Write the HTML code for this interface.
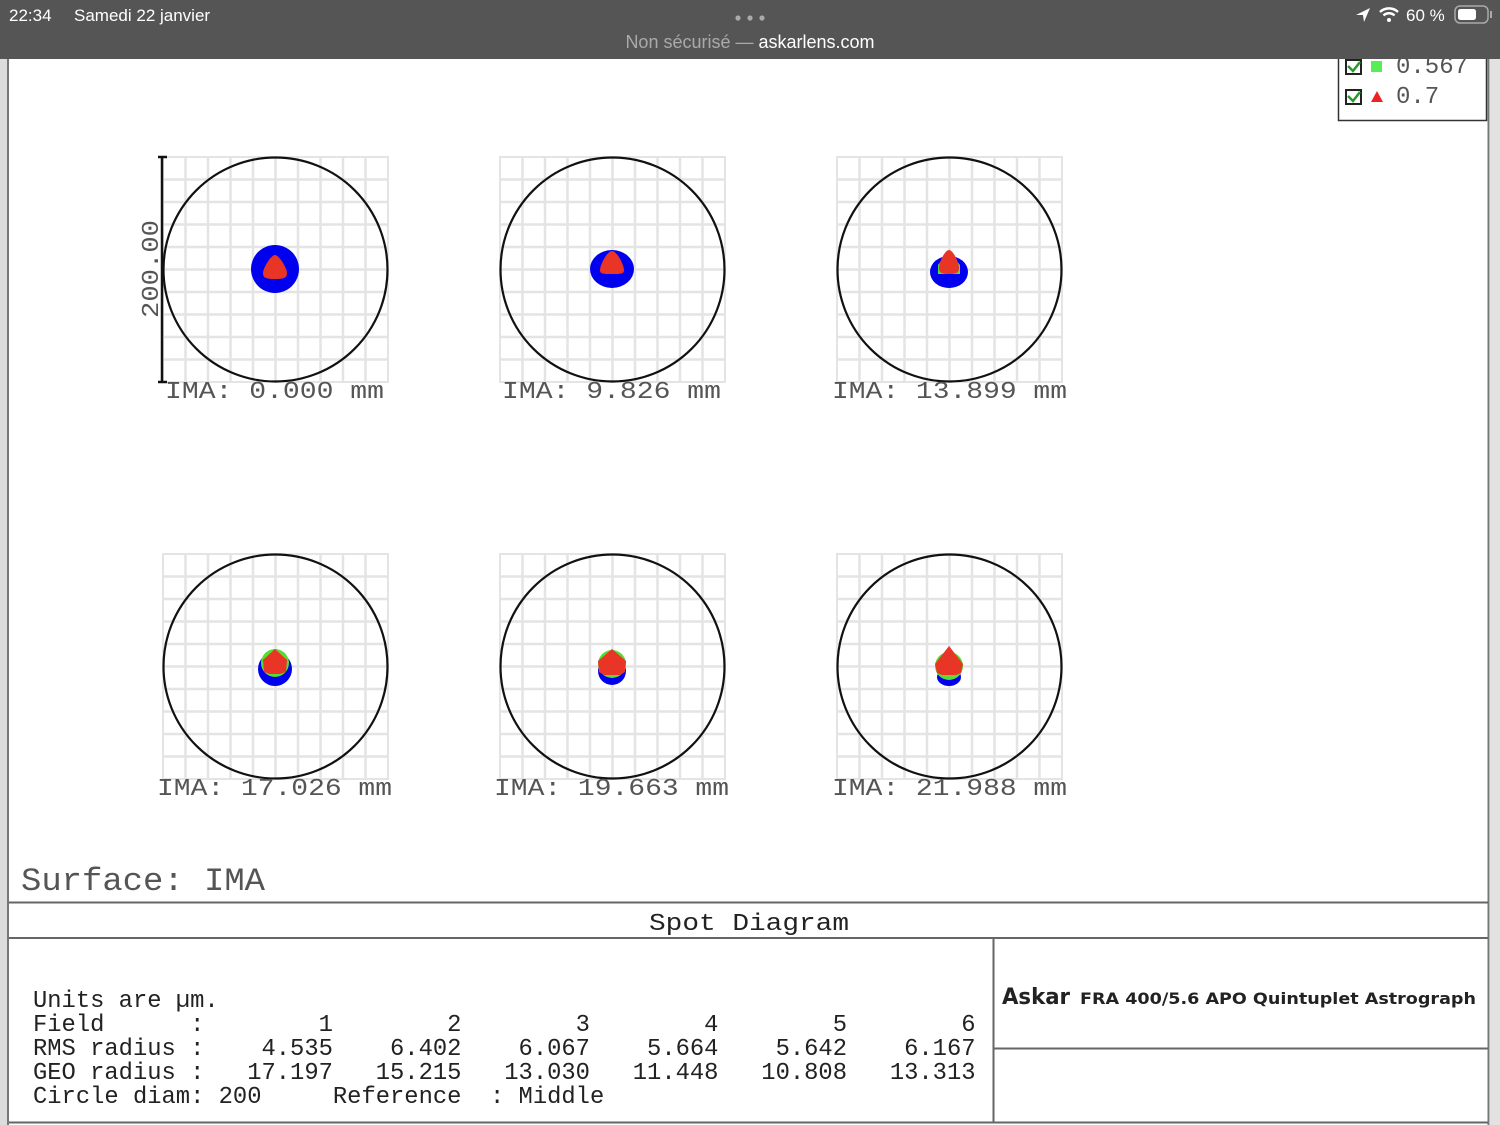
<!DOCTYPE html>
<html><head><meta charset="utf-8"><style>
html,body{margin:0;padding:0;width:1500px;height:1125px;overflow:hidden;background:#fff}
svg{display:block}
.m{font-family:"Liberation Mono",monospace;fill:#555}
.t{font-family:"Liberation Mono",monospace;fill:#222;font-size:23.8px}
</style></head><body>
<svg width="1500" height="1125" viewBox="0 0 1500 1125" xmlns="http://www.w3.org/2000/svg">
<defs>
<g id="grid">
<rect x="0" y="0" width="225" height="225" fill="none" stroke="#e4e4e4" stroke-width="2"/>
<path d="M22.5 0V225M45 0V225M67.5 0V225M90 0V225M112.5 0V225M135 0V225M157.5 0V225M180 0V225M202.5 0V225M0 22.5H225M0 45H225M0 67.5H225M0 90H225M0 112.5H225M0 135H225M0 157.5H225M0 180H225M0 202.5H225" stroke="#e4e4e4" stroke-width="2.5"/>
<circle cx="112.5" cy="112.5" r="112" fill="none" stroke="#111" stroke-width="2.2"/>
</g>
</defs>
<rect x="0" y="59" width="1500" height="1066" fill="#fff"/>
<rect x="0" y="59" width="7" height="1066" fill="#dcdcdc"/>
<rect x="7" y="59" width="2" height="1066" fill="#777"/>
<rect x="1490" y="59" width="10" height="1066" fill="#e2e2e2"/>
<rect x="1487.5" y="59" width="2" height="1066" fill="#777"/>
<!-- status bar -->
<rect x="0" y="0" width="1500" height="59" fill="#555"/>
<text x="9" y="21" font-family="Liberation Sans,sans-serif" font-size="17" fill="#fff">22:34</text>
<text x="74" y="21" font-family="Liberation Sans,sans-serif" font-size="17" fill="#fff">Samedi 22 janvier</text>
<circle cx="738" cy="18" r="2.6" fill="#aaa"/><circle cx="750" cy="18" r="2.6" fill="#aaa"/><circle cx="762" cy="18" r="2.6" fill="#aaa"/>
<text x="750" y="48" text-anchor="middle" font-family="Liberation Sans,sans-serif" font-size="18" fill="#aaa">Non sécurisé — <tspan fill="#fff">askarlens.com</tspan></text>
<path d="M1370 8 L1356 15 L1363 15 L1364 22 Z" fill="#fff"/>
<path d="M1380 12 A13 13 0 0 1 1398 12" stroke="#fff" stroke-width="2.5" fill="none"/>
<path d="M1383.5 15.5 A8 8 0 0 1 1394.5 15.5" stroke="#fff" stroke-width="2.5" fill="none"/>
<circle cx="1389" cy="20" r="2" fill="#fff"/>
<text x="1406" y="21" font-family="Liberation Sans,sans-serif" font-size="17" fill="#fff">60 %</text>
<rect x="1455" y="6" width="33" height="17" rx="5" fill="none" stroke="#aaa" stroke-width="1.5"/>
<rect x="1458" y="9" width="18" height="11" rx="2.5" fill="#fff"/>
<rect x="1490" y="11" width="2" height="7" fill="#aaa"/>
<!-- legend -->
<path d="M1338.5 59 V120.5 H1486.5 V59" fill="none" stroke="#333" stroke-width="1.5"/>
<rect x="1346" y="60" width="15" height="14" fill="#fff" stroke="#222" stroke-width="2"/>
<path d="M1348 66 L1353 71 L1360 62" stroke="#2a9a2a" stroke-width="2.5" fill="none"/>
<rect x="1371" y="61" width="11" height="11" fill="#55ee55"/>
<text x="1396" y="73" class="m" font-size="24" fill="#777">0.567</text>
<rect x="1346" y="90" width="15" height="14" fill="#fff" stroke="#222" stroke-width="2"/>
<path d="M1348 96 L1353 101 L1360 92" stroke="#2a9a2a" stroke-width="2.5" fill="none"/>
<path d="M1377 91 L1383 102 L1371 102 Z" fill="#ee2222"/>
<text x="1396" y="103" class="m" font-size="24" fill="#777">0.7</text>
<!-- plots -->
<use href="#grid" x="163" y="157"/>
<use href="#grid" x="500" y="157"/>
<use href="#grid" x="837" y="157"/>
<use href="#grid" x="163" y="554"/>
<use href="#grid" x="500" y="554"/>
<use href="#grid" x="837" y="554"/>
<!-- scale bar -->
<path d="M162 157 V382 M158 157 H167 M158 382 H167" stroke="#111" stroke-width="2.5"/>
<text transform="translate(158,318) rotate(-90)" class="m" font-size="24" fill="#888" textLength="98" lengthAdjust="spacingAndGlyphs">200.00</text>
<!-- spots row1 -->
<circle cx="275" cy="269" r="24" fill="#0000ee"/>
<path d="M275 255 C279 255 287 268 287 273 C287 278 284 279 275 279 C266 279 263 278 263 273 C263 268 271 255 275 255 Z" fill="#e83525"/>
<ellipse cx="612" cy="269" rx="22" ry="19" fill="#0000ee"/>
<path d="M612 251 C617 251 624 265 624 270 C624 274 621 274 612 274 C603 274 600 274 600 270 C600 265 607 251 612 251 Z" fill="#e83525"/>
<ellipse cx="949" cy="272" rx="19" ry="16" fill="#0000ee"/>
<path d="M949 251 L960 265 L960 274 L938 274 L938 265 Z" fill="#55dd33"/>
<path d="M949 250 C953 250 959 262 959 268 C959 273 956 274 949 274 C942 274 939 273 939 268 C939 262 945 250 949 250 Z" fill="#e83525"/>
<!-- spots row2 -->
<circle cx="275" cy="669" r="17" fill="#0000ee"/>
<circle cx="275" cy="663" r="14" fill="#55dd33"/>
<path d="M275 649 L287 660 L286 672 L280 674 L270 674 L264 672 L263 660 Z" fill="#e83525"/>
<circle cx="612" cy="671" r="14" fill="#0000ee"/>
<circle cx="612" cy="664" r="14" fill="#55dd33"/>
<path d="M612 649 L626 661 L625 672 L620 675 L604 675 L599 672 L598 661 Z" fill="#e83525"/>
<ellipse cx="949" cy="677" rx="12" ry="9" fill="#0000ee"/>
<circle cx="949" cy="666" r="14" fill="#55dd33"/>
<path d="M949 646 L963 664 L961 673 L956 675 L942 675 L937 673 L935 664 Z" fill="#e83525"/>
<!-- IMA labels -->
<text x="165" y="398" class="m" font-size="24" fill="#777" textLength="219" lengthAdjust="spacingAndGlyphs">IMA: 0.000 mm</text>
<text x="502" y="398" class="m" font-size="24" fill="#777" textLength="219" lengthAdjust="spacingAndGlyphs">IMA: 9.826 mm</text>
<text x="832" y="398" class="m" font-size="24" fill="#777" textLength="235" lengthAdjust="spacingAndGlyphs">IMA: 13.899 mm</text>
<text x="157" y="795" class="m" font-size="24" fill="#777" textLength="235" lengthAdjust="spacingAndGlyphs">IMA: 17.026 mm</text>
<text x="494" y="795" class="m" font-size="24" fill="#777" textLength="235" lengthAdjust="spacingAndGlyphs">IMA: 19.663 mm</text>
<text x="832" y="795" class="m" font-size="24" fill="#777" textLength="235" lengthAdjust="spacingAndGlyphs">IMA: 21.988 mm</text>
<!-- surface -->
<text x="21" y="890" class="m" font-size="32" fill="#666" textLength="244" lengthAdjust="spacingAndGlyphs">Surface: IMA</text>
<!-- table lines -->
<path d="M9 902.5 H1488 M9 938 H1488 M993.5 938 V1122 M993 1048.5 H1488 M9 1122.5 H1488" stroke="#666" stroke-width="2"/>
<text x="649" y="930" class="t" font-size="27" textLength="200" lengthAdjust="spacingAndGlyphs">Spot Diagram</text>
<text class="t" xml:space="preserve">
<tspan x="33" y="1007">Units are µm.</tspan>
<tspan x="33" y="1031">Field      :        1        2        3        4        5        6</tspan>
<tspan x="33" y="1055">RMS radius :    4.535    6.402    6.067    5.664    5.642    6.167</tspan>
<tspan x="33" y="1079">GEO radius :   17.197   15.215   13.030   11.448   10.808   13.313</tspan>
<tspan x="33" y="1103">Circle diam: 200     Reference  : Middle</tspan>
</text>
<text x="1002" y="1004" font-family="DejaVu Sans,sans-serif" font-weight="bold" font-size="22" fill="#222" textLength="68" lengthAdjust="spacingAndGlyphs">Askar</text>
<text x="1080" y="1004" font-family="DejaVu Sans,sans-serif" font-weight="bold" font-size="16" fill="#222" textLength="396" lengthAdjust="spacingAndGlyphs">FRA 400/5.6 APO Quintuplet Astrograph</text>
</svg>
</body></html>
